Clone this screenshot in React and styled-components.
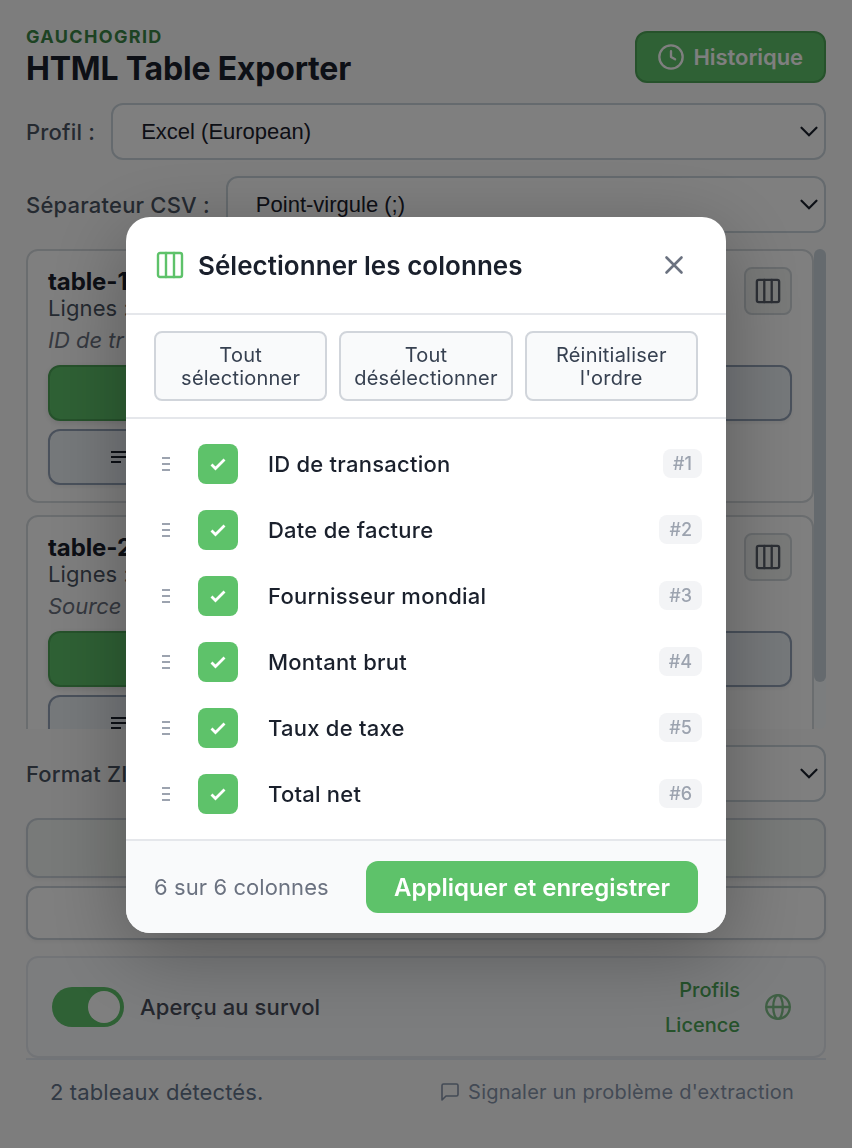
import React from "react";
import styled, { createGlobalStyle, css } from "styled-components";

const GlobalStyle = createGlobalStyle`
  * { box-sizing: border-box; }
  body {
    margin: 0;
    background: #fbfbfb;
    font-family: Inter, "Liberation Sans", sans-serif;
    font-size: 22px;
    color: #1a202c;
    overflow: hidden;
  }
  button { font-family: inherit; margin: 0; }
`;

const Page = styled.div`
  height: 1148px;
  padding: 26px 26px 20px;
  display: flex;
  flex-direction: column;
  overflow: hidden;
`;

const Header = styled.header`
  display: flex;
  justify-content: space-between;
  height: 77px;
  flex: none;
`;

const Eyebrow = styled.div`
  font-size: 18px;
  line-height: 22px;
  font-weight: 700;
  letter-spacing: 1.35px;
  color: #3b8746;
`;

const Title = styled.h1`
  margin: 0;
  font-size: 32px;
  line-height: 42px;
  font-weight: 700;
  letter-spacing: -0.2px;
`;

const HistoryButton = styled.button`
  display: flex;
  align-items: center;
  gap: 8px;
  height: 52px;
  margin-top: 5px;
  padding: 0 21px 0 20px;
  border: 2px solid #4ca457;
  border-radius: 12px;
  background: #5ec26a;
  color: #fff;
  font-size: 22px;
  font-weight: 600;
  letter-spacing: -0.06px;
`;

const Field = styled.div`
  display: flex;
  align-items: center;
  gap: 16px;
  height: 57px;
  margin-bottom: 16px;
  flex: none;
`;

const FieldLabel = styled.label`
  font-weight: 500;
  letter-spacing: 0.2px;
  color: #4b5563;
  white-space: nowrap;
`;

const Select = styled.div`
  flex: 1;
  height: 57px;
  display: flex;
  align-items: center;
  justify-content: space-between;
  padding: 0 5px 0 28px;
  border: 2px solid #cbd5dc;
  border-radius: 12px;
  background: #fff;
  font-family: "Liberation Sans", sans-serif;
  font-size: 22px;
`;

const TableList = styled.div`
  display: flex;
  height: 480px;
  margin-bottom: 16px;
  overflow: hidden;
  flex: none;
`;

const Cards = styled.div`
  flex: 1;
  display: flex;
  flex-direction: column;
  gap: 12px;
`;

const ScrollTrack = styled.div`
  width: 12px;
  border-radius: 6px;
  background: #f7fafc;
`;

const ScrollThumb = styled.div`
  height: 433px;
  border-radius: 6px;
  background: #cbd5dc;
`;

const Card = styled.article`
  height: 254px;
  flex: none;
  padding: 16px 20px;
  border: 2px solid #d5dade;
  border-radius: 12px;
  background: #fff;
`;

const CardTop = styled.div`
  display: flex;
  justify-content: space-between;
  height: 98px;
`;

const CardName = styled.div`
  padding-top: 1px;
  font-size: 24px;
  line-height: 27px;
  font-weight: 700;
  letter-spacing: -0.1px;
`;

const CardRows = styled.div`
  line-height: 27px;
  letter-spacing: 0.1px;
  color: #4b5563;
`;

const CardPreview = styled.div`
  margin-top: 5px;
  line-height: 27px;
  font-style: italic;
  color: #6b7280;
`;

const IconButton = styled.button`
  width: 48px;
  height: 48px;
  display: grid;
  place-items: center;
  padding: 0;
  border: 2px solid #d2d8dc;
  border-radius: 8px;
  background: #f2f5f3;
  color: #5a606c;
`;

const CardActions = styled.div`
  display: grid;
  grid-template-columns: 1fr 1fr;
  gap: 8px;
`;

const ActionButton = styled.button`
  height: 56px;
  display: flex;
  align-items: center;
  padding: 0 61px;
  border: 2px solid #94a3b8;
  border-radius: 12px;
  background: #edf2f7;
  box-shadow: 0 2px 4px rgba(0, 0, 0, 0.06);
  ${(p) =>
    p.$primary &&
    css`
      border-color: #4ca457;
      background: #5ec26a;
      box-shadow: 0 2px 6px rgba(0, 0, 0, 0.12);
    `}
`;

const WideButton = styled.button`
  width: 100%;
  height: ${(p) => p.$height}px;
  flex: none;
  margin-bottom: ${(p) => p.$after}px;
  border: 2px solid #cbd2da;
  border-radius: 12px;
  background: ${(p) => (p.$muted ? "#f1f5f2" : "#fff")};
  box-shadow: 0 2px 4px rgba(0, 0, 0, 0.05);
`;

const OptionsPanel = styled.section`
  height: 102px;
  flex: none;
  display: flex;
  align-items: center;
  padding: 0 33px 0 24px;
  border: 2px solid #e4e8ee;
  border-radius: 12px;
  background: #f8fafc;
`;

const Toggle = styled.span`
  width: 72px;
  height: 40px;
  padding: 4px;
  border-radius: 20px;
  background: #5ec26a;
  display: flex;
  justify-content: flex-end;
`;

const Knob = styled.span`
  width: 32px;
  height: 32px;
  border-radius: 50%;
  background: #fff;
`;

const ToggleLabel = styled.span`
  flex: 1;
  margin-left: 16px;
  font-weight: 500;
  letter-spacing: 0.1px;
  color: #4a4f5c;
`;

const Links = styled.nav`
  display: flex;
  flex-direction: column;
  align-items: flex-end;
  margin-right: 25px;
  padding-top: 1px;
  font-size: 20px;
  line-height: 35px;
  font-weight: 500;
  color: #4ca457;
`;

const StatusBar = styled.footer`
  display: flex;
  justify-content: space-between;
  align-items: center;
  height: 66px;
  flex: none;
  padding: 0 32px 0 24px;
  border-top: 2px solid #e2e8f0;
  color: #64748b;
  letter-spacing: 0.12px;
`;

const Report = styled.span`
  display: flex;
  align-items: center;
  gap: 9px;
  font-size: 20px;
  letter-spacing: 0.2px;
  color: #8795ab;
`;

const Overlay = styled.div`
  position: fixed;
  inset: 0;
  padding-top: 2px;
  display: flex;
  align-items: center;
  justify-content: center;
  background: rgba(0, 0, 0, 0.5);
`;

const Modal = styled.div`
  width: 600px;
  border-radius: 24px;
  overflow: hidden;
  background: #fff;
  box-shadow: 0 20px 80px rgba(0, 0, 0, 0.3);
`;

const ModalHeader = styled.div`
  height: 98px;
  display: flex;
  align-items: center;
  padding: 0 38px 0 30px;
  border-bottom: 2px solid #e5e7eb;
  color: #5ec26a;
`;

const ModalTitle = styled.h2`
  flex: 1;
  margin: 0 0 0 14px;
  font-size: 26px;
  font-weight: 600;
  letter-spacing: 0.04px;
  color: #1a202c;
`;

const Toolbar = styled.div`
  display: grid;
  grid-template-columns: repeat(3, 1fr);
  gap: 12px;
  padding: 16px 28px;
  border-bottom: 2px solid #e5e7eb;
`;

const ToolButton = styled.button`
  height: 70px;
  padding: 2px 12px 0;
  border: 2px solid #d1d5db;
  border-radius: 8px;
  background: #f9fafb;
  color: #374151;
  font-size: 20px;
  line-height: 23px;
  letter-spacing: 0.23px;
`;

const ColumnList = styled.ul`
  margin: 0;
  padding: 12px;
  list-style: none;
`;

const ColumnRow = styled.li`
  height: 66px;
  display: flex;
  align-items: center;
  padding: 0 12px;
`;

const Handle = styled.span`
  width: 32px;
  margin-right: 16px;
  display: flex;
  flex-direction: column;
  align-items: center;
  gap: 4px;
`;

const HandleBar = styled.i`
  width: 8px;
  height: 2px;
  background: #9ca3af;
`;

const Checkbox = styled.span`
  width: 40px;
  height: 40px;
  border-radius: 8px;
  background: #5ec26a;
  display: grid;
  place-items: center;
`;

const ColumnName = styled.span`
  flex: 1;
  margin-left: 30px;
  font-weight: 500;
  letter-spacing: 0.24px;
`;

const Badge = styled.span`
  height: 29px;
  margin-bottom: 1px;
  padding: 0 10px;
  border-radius: 8px;
  background: #f3f4f6;
  color: #9ca3af;
  font-size: 18px;
  line-height: 29px;
  font-weight: 500;
`;

const ModalFooter = styled.div`
  height: 94px;
  display: flex;
  align-items: center;
  justify-content: space-between;
  padding: 0 28px;
  border-top: 2px solid #e5e7eb;
  background: #f9fafb;
  color: #6b7280;
  letter-spacing: 0.08px;
`;

const ApplyButton = styled.button`
  width: 332px;
  height: 52px;
  padding: 0;
  border: 0;
  border-radius: 12px;
  background: #5ec26a;
  color: #fff;
  font-size: 24px;
  font-weight: 600;
`;

const Svg = ({ size, box = 24, width = 2, children }) => (
  <svg width={size} height={size} viewBox={`0 0 ${box} ${box}`} fill="none" stroke="currentColor"
    strokeWidth={width} strokeLinecap="round" strokeLinejoin="round">
    {children}
  </svg>
);

const ColumnsIcon = ({ size, width = 2.4 }) => (
  <Svg size={size} box={28} width={width}>
    <rect x="2" y="2" width="24" height="24" rx="2" />
    <path d="M10 2v24M18 2v24" />
  </Svg>
);

const Chevron = () => (
  <svg width="20" height="12" viewBox="0 0 20 12" fill="none" stroke="#1a202c" strokeWidth="2.2" strokeLinecap="round">
    <path d="M2.500 1.700l7.500 7.500L17.500 1.700" />
  </svg>
);

const LinesIcon = () => (
  <svg width="20" height="12" viewBox="0 0 20 12" stroke="#1a202c" strokeWidth="2">
    <path d="M0 1h20M0 6h20M0 11h10" />
  </svg>
);

const tables = [
  { name: "table-1", preview: "ID de tr" },
  { name: "table-2", preview: "Source" },
];

const columns = [
  "ID de transaction",
  "Date de facture",
  "Fournisseur mondial",
  "Montant brut",
  "Taux de taxe",
  "Total net",
];

const SelectField = ({ label, value }) => (
  <Field>
    <FieldLabel>{label}</FieldLabel>
    <Select>
      <span>{value}</span>
      <Chevron />
    </Select>
  </Field>
);

const TableCard = ({ name, preview }) => (
  <Card>
    <CardTop>
      <div>
        <CardName>{name}</CardName>
        <CardRows>Lignes :</CardRows>
        <CardPreview>{preview}</CardPreview>
      </div>
      <IconButton><ColumnsIcon size={26} width={2.5} /></IconButton>
    </CardTop>
    <CardActions>
      <ActionButton $primary />
      <ActionButton />
      <ActionButton><LinesIcon /></ActionButton>
    </CardActions>
  </Card>
);

const ColumnDialog = () => (
  <Overlay>
    <Modal>
      <ModalHeader>
        <ColumnsIcon size={28} />
        <ModalTitle>Sélectionner les colonnes</ModalTitle>
        <svg width="28" height="28" viewBox="0 0 28 28" stroke="#6b7280" strokeWidth="2.6" strokeLinecap="round">
          <path d="M6.500 6.500l15 15M21.500 6.500l-15 15" />
        </svg>
      </ModalHeader>
      <Toolbar>
        <ToolButton>Tout sélectionner</ToolButton>
        <ToolButton>Tout désélectionner</ToolButton>
        <ToolButton>Réinitialiser l'ordre</ToolButton>
      </Toolbar>
      <ColumnList>
        {columns.map((name, i) => (
          <ColumnRow key={name}>
            <Handle><HandleBar /><HandleBar /><HandleBar /></Handle>
            <Checkbox>
              <svg width="16" height="14" viewBox="0 0 16 14" fill="none" stroke="#fff" strokeWidth="2.8">
                <path d="M1.500 7.500l4 4L14.500 2.500" />
              </svg>
            </Checkbox>
            <ColumnName>{name}</ColumnName>
            <Badge>#{i + 1}</Badge>
          </ColumnRow>
        ))}
      </ColumnList>
      <ModalFooter>
        <span>6 sur 6 colonnes</span>
        <ApplyButton>Appliquer et enregistrer</ApplyButton>
      </ModalFooter>
    </Modal>
  </Overlay>
);

export default function App() {
  return (
    <>
      <GlobalStyle />
      <Page>
        <Header>
          <div>
            <Eyebrow>GAUCHOGRID</Eyebrow>
            <Title>HTML Table Exporter</Title>
          </div>
          <HistoryButton>
            <Svg size={28}>
              <circle cx="12" cy="12" r="10" />
              <path d="M12 7v5l3.500 2" />
            </Svg>
            Historique
          </HistoryButton>
        </Header>
        <SelectField label="Profil :" value="Excel (European)" />
        <SelectField label="Séparateur CSV :" value="Point-virgule (;)" />
        <TableList>
          <Cards>
            {tables.map((t) => <TableCard key={t.name} {...t} />)}
          </Cards>
          <ScrollTrack><ScrollThumb /></ScrollTrack>
        </TableList>
        <SelectField label="Format ZIP :" />
        <WideButton $height={60} $after={8} $muted />
        <WideButton $height={54} $after={16} />
        <OptionsPanel>
          <Toggle><Knob /></Toggle>
          <ToggleLabel>Aperçu au survol</ToggleLabel>
          <Links>
            <span>Profils</span>
            <span>Licence</span>
          </Links>
          <Svg size={26} box={26} width={2.3}>
            <g stroke="#7fbf88">
              <circle cx="13" cy="13" r="11.800" />
              <ellipse cx="13" cy="13" rx="4.800" ry="11.800" />
              <path d="M1.500 13h23" />
            </g>
          </Svg>
        </OptionsPanel>
        <StatusBar>
          <span>2 tableaux détectés.</span>
          <Report>
            <Svg size={18} box={18} width={1.6}>
              <path d="M1 17V2.500A1.500 1.500 0 0 1 2.500 1h13A1.500 1.500 0 0 1 17 2.500v9a1.500 1.500 0 0 1-1.500 1.500H5z" />
            </Svg>
            Signaler un problème d'extraction
          </Report>
        </StatusBar>
      </Page>
      <ColumnDialog />
    </>
  );
}
